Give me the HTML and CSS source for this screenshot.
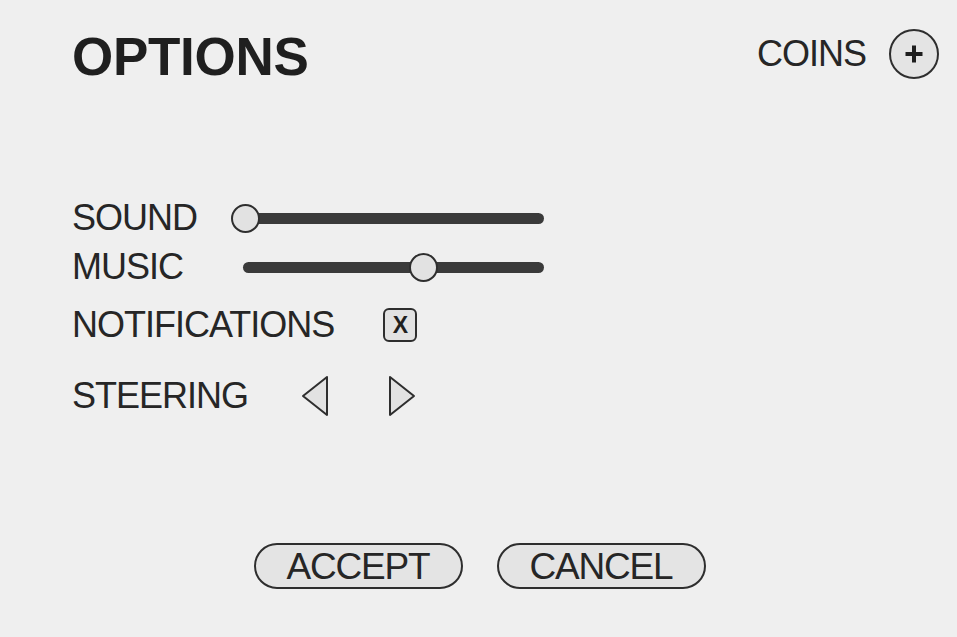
FILE: index.html
```html
<!DOCTYPE html>
<html>
<head>
<meta charset="utf-8">
<link rel="stylesheet" href="styles.css">
</head>
<body>
<div class="screen">
  <header class="header">
    <h1 class="title">OPTIONS</h1>
    <div class="coins">
      <span class="coins-label">COINS</span>
      <button class="round-btn" aria-label="Add coins">
        <svg width="18" height="18" viewBox="0 0 18 18"><rect x="7" y="0.5" width="4" height="17" fill="#1e1e1e"/><rect x="0.5" y="7" width="17" height="4" fill="#1e1e1e"/></svg>
      </button>
    </div>
  </header>

  <section class="settings">
    <div class="row row-sound">
      <span class="label label-fixed">SOUND</span>
      <div class="slider">
        <div class="track"></div>
        <div class="knob" style="left:0px"></div>
      </div>
    </div>
    <div class="row row-music">
      <span class="label label-fixed">MUSIC</span>
      <div class="slider">
        <div class="track"></div>
        <div class="knob" style="left:178px"></div>
      </div>
    </div>
    <div class="row row-notif">
      <span class="label">NOTIFICATIONS</span>
      <div class="checkbox">X</div>
    </div>
    <div class="row row-steer">
      <span class="label">STEERING</span>
      <div class="arrows">
        <svg class="arrow" width="28" height="42" viewBox="0 0 28 42"><polygon points="26,2 2,21 26,40" fill="#e2e2e2" stroke="#2e2e2e" stroke-width="2" stroke-linejoin="round"/></svg>
        <svg class="arrow" width="28" height="42" viewBox="0 0 28 42"><polygon points="2,2 26,21 2,40" fill="#e2e2e2" stroke="#2e2e2e" stroke-width="2" stroke-linejoin="round"/></svg>
      </div>
    </div>
  </section>

  <footer class="actions">
    <button class="pill">ACCEPT</button>
    <button class="pill">CANCEL</button>
  </footer>
</div>
</body>
</html>
```

FILE: styles.css
```css
* { box-sizing: border-box; }
html, body {
  margin: 0;
  padding: 0;
  background: #efefef;
}
body {
  font-family: "Liberation Sans", Arial, sans-serif;
  color: #1f1f1f;
}
.screen {
  width: 957px;
  height: 637px;
  display: flex;
  flex-direction: column;
}
.header {
  display: flex;
  justify-content: space-between;
  align-items: flex-start;
  padding: 30px 18px 0 72px;
}
.title {
  margin: 0;
  font-size: 53px;
  line-height: 53px;
  font-weight: bold;
  letter-spacing: -0.3px;
}
.coins {
  display: flex;
  align-items: center;
  gap: 23px;
  height: 48px;
}
.coins-label {
  font-size: 36px;
  line-height: 36px;
  letter-spacing: -1px;
  color: #262626;
}
.round-btn {
  width: 50px;
  height: 50px;
  border-radius: 50%;
  border: 2px solid #2e2e2e;
  background: #e4e4e4;
  display: flex;
  align-items: center;
  justify-content: center;
  padding: 0;
}
.settings {
  margin-top: 118px;
  padding-left: 72px;
  display: flex;
  flex-direction: column;
}
.row {
  display: flex;
  align-items: center;
  height: 34px;
}
.row-music { margin-top: 15px; }
.row-notif { margin-top: 24px; }
.row-steer { margin-top: 37px; }
.label {
  font-size: 36px;
  line-height: 36px;
  letter-spacing: -1px;
  color: #262626;
}
.label-fixed { width: 159px; }
.slider {
  position: relative;
  width: 313px;
  height: 30px;
  display: flex;
  align-items: center;
}
.track {
  margin-left: 12px;
  flex: 1;
  height: 11px;
  border-radius: 6px;
  background: #3a3a3a;
}
.knob {
  position: absolute;
  top: 0.5px;
  width: 29px;
  height: 29px;
  border-radius: 50%;
  background: #e2e2e2;
  border: 2px solid #2e2e2e;
}
.checkbox {
  margin-left: 49px;
  width: 34px;
  height: 34px;
  border: 2px solid #2e2e2e;
  border-radius: 6px;
  background: #e2e2e2;
  display: flex;
  align-items: center;
  justify-content: center;
  font-weight: bold;
  font-size: 23px;
  line-height: 1;
  padding-top: 1px;
}
.arrows {
  margin-left: 53px;
  display: flex;
  gap: 59px;
}
.arrow { display: block; }
.actions {
  margin-top: 130px;
  display: flex;
  justify-content: center;
  gap: 34px;
  padding-left: 2px;
}
.pill {
  width: 209px;
  height: 46px;
  border: 2px solid #2e2e2e;
  border-radius: 23px;
  background: #e4e4e4;
  font-family: "Liberation Sans", Arial, sans-serif;
  font-size: 37px;
  line-height: 1;
  letter-spacing: -1.2px;
  color: #262626;
  padding: 0;
  display: flex;
  align-items: center;
  justify-content: center;
}
```
